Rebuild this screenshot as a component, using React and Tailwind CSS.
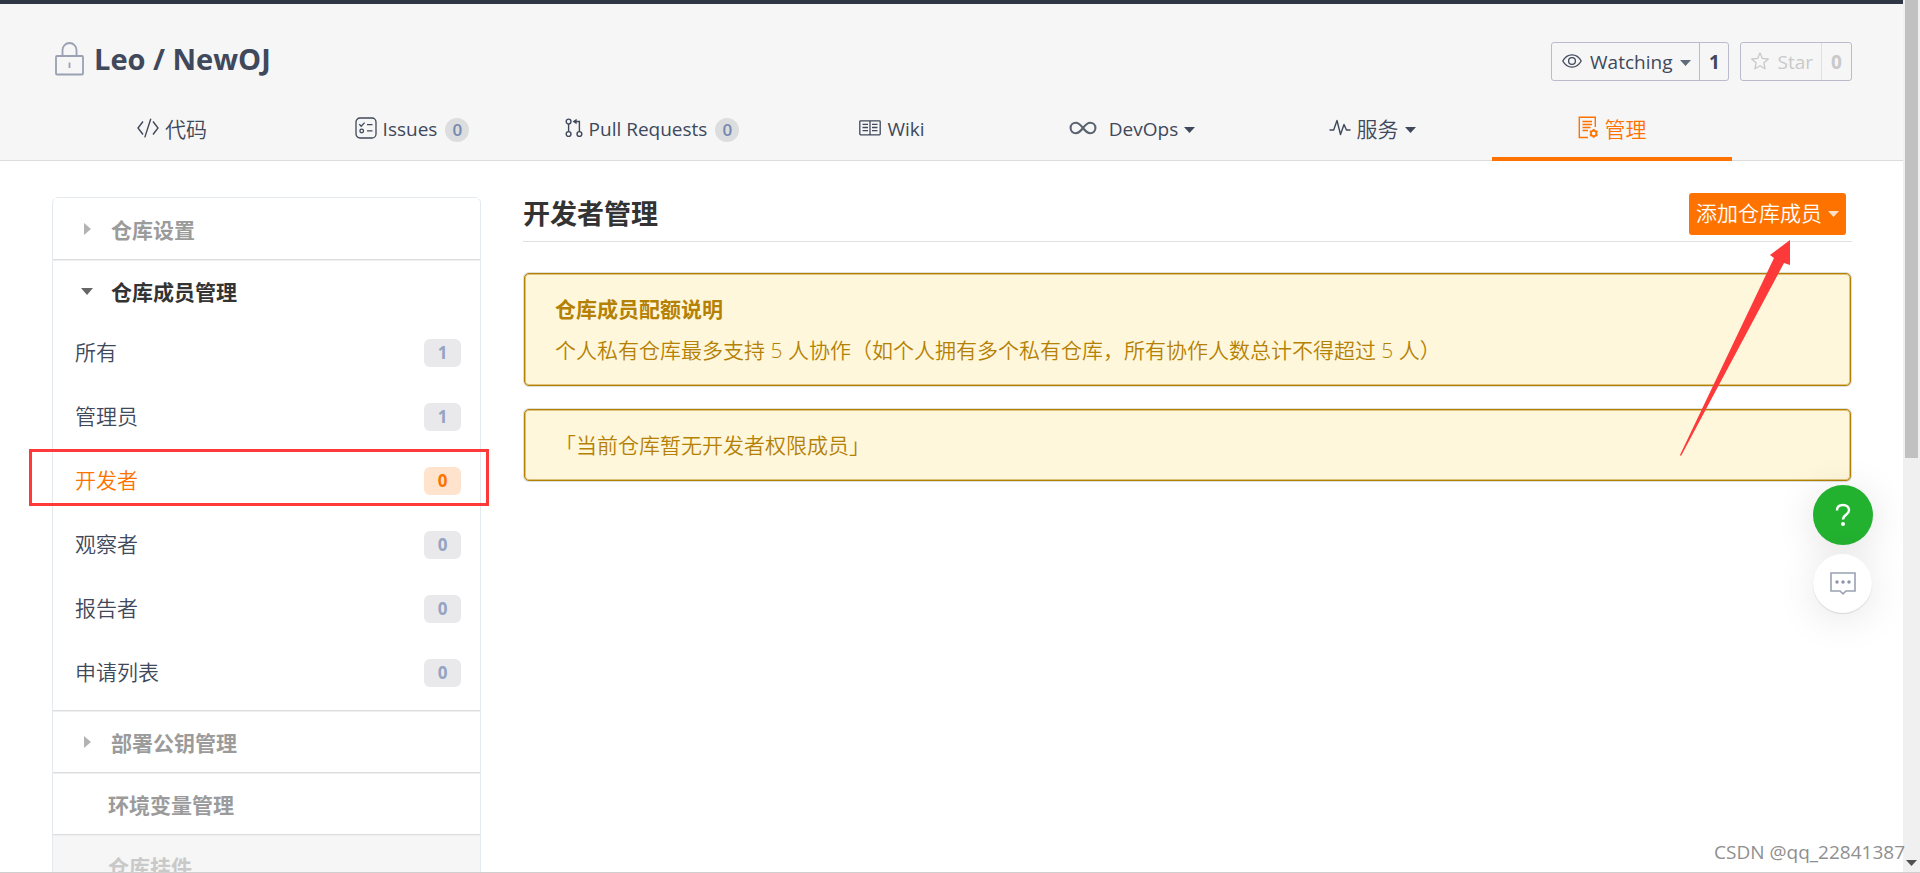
import React, { useState } from "react";

const navItems = [
  { key: "code", label: "代码", Icon: CodeIcon },
  { key: "issues", label: "Issues", count: 0, latin: true, Icon: IssuesIcon },
  { key: "pulls", label: "Pull Requests", count: 0, latin: true, Icon: PullIcon },
  { key: "wiki", label: "Wiki", latin: true, Icon: WikiIcon },
  { key: "devops", label: "DevOps", latin: true, dropdown: true, Icon: InfinityIcon },
  { key: "service", label: "服务", dropdown: true, Icon: PulseIcon },
  { key: "manage", label: "管理", Icon: ManageIcon },
];

const members = [
  { name: "所有", count: 1 },
  { name: "管理员", count: 1 },
  { name: "开发者", count: 0 },
  { name: "观察者", count: 0 },
  { name: "报告者", count: 0 },
  { name: "申请列表", count: 0 },
];

function CodeIcon() {
  return (
    <svg width="22" height="20" viewBox="0 0 22 20" fill="none" stroke="currentColor" strokeWidth="1.4">
      <path d="M6 3.5L1 10l5 6.5M16 3.5l5 6.5-5 6.5M13.8.8L7.8 19.4" />
    </svg>
  );
}

function IssuesIcon() {
  return (
    <svg width="22" height="22" viewBox="0 0 22 22" fill="none" stroke="currentColor" strokeWidth="1.3">
      <rect x="1" y="1" width="20" height="20" rx="4" />
      <path d="M4.3 7.3l1.9 1.9L9.6 5.6M12 7.7h5.5M12 13.8h5.5" />
      <circle cx="6.7" cy="14" r="1.8" />
    </svg>
  );
}

function PullIcon() {
  return (
    <svg width="18" height="20" viewBox="0 0 18 20" fill="none" stroke="currentColor" strokeWidth="1.4">
      <circle cx="3.6" cy="3.5" r="2.4" />
      <circle cx="3.6" cy="16" r="2.4" />
      <circle cx="14.4" cy="16" r="2.4" />
      <path d="M3.6 6v7.6M10 3.5h4.4v10.1" />
      <path d="M7.6 3.5L11.6.8v5.4z" fill="currentColor" stroke="none" />
    </svg>
  );
}

function WikiIcon() {
  return (
    <svg width="22" height="16" viewBox="0 0 22 16" fill="none" stroke="currentColor" strokeWidth="1.3">
      <rect x=".8" y=".8" width="20.4" height="14" rx=".8" />
      <path d="M11 1v14M3.5 4.3H9M3.5 7.5H9M3.5 10.6H9M13 4.3h5.5M13 7.5h5.5M13 10.6h5.5" />
    </svg>
  );
}

function InfinityIcon() {
  return (
    <svg width="28" height="14" viewBox="0 0 28 14" fill="none" stroke="#5b6270" strokeWidth="2.1">
      <path d="M14 7c-2.4-3.2-4.4-5.2-7.2-5.2C3.8 1.8 1.6 4.1 1.6 7s2.2 5.2 5.2 5.2C9.6 12.2 11.600 10.2 14 7c2.4-3.2 4.4-5.2 7.2-5.2 3 0 5.2 2.3 5.2 5.2s-2.2 5.2-5.2 5.2C18.4 12.2 16.4 10.2 14 7z" />
    </svg>
  );
}

function PulseIcon() {
  return (
    <svg width="22" height="17" viewBox="0 0 22 17" fill="none" stroke="currentColor" strokeWidth="1.4" strokeLinejoin="round">
      <path d="M.5 11h4.2L8 1.5l3.5 14L15 5.5l2.5 5.5h4" />
    </svg>
  );
}

function ManageIcon() {
  return (
    <svg width="21" height="23" viewBox="0 0 21 23" fill="none" stroke="currentColor" strokeWidth="1.4">
      <path d="M17.3 11V1.2h-16v20.3H10" />
      <path d="M4.5 5.5H14M4.5 8.5H14M4.5 11.5h8M4.5 14.5H10" strokeWidth="1.3" />
      <circle cx="15.7" cy="17.4" r="2.7" strokeWidth="1.7" />
      <path d="M15.7 13v1.6M15.7 20.2v1.6M11.9 15.2l1.4.8M18.1 18.8l1.4.8M11.9 19.6l1.4-.8M18.1 16l1.4-.8" strokeWidth="2" />
    </svg>
  );
}

function Caret({ className = "" }) {
  return (
    <svg width="11" height="6" viewBox="0 0 11 6" className={className} fill="currentColor">
      <path d="M0 0h11L5.5 6z" />
    </svg>
  );
}

function TopHeader() {
  return (
    <header className="border-b border-[#dcdcdc] bg-[#f6f6f6]">
      <div className="h-1 bg-[#2f3747]" />
      <div className="ml-[52px] mr-[51px]">
        <div className="flex justify-between pt-[38px]">
          <h1 className="flex h-[34px] items-center gap-2.5 pl-[3px] text-[29px] font-bold text-[#40485b]">
            <svg width="29" height="34" viewBox="0 0 29 34" fill="none" stroke="#9aa1b3" strokeWidth="1.8">
              <rect x="1" y="14" width="27" height="18.5" rx="1" />
              <path d="M7.5 14V8a7 7 0 0 1 14 0v6M14.5 20.5V26" />
            </svg>
            <a href="#repo">Leo / NewOJ</a>
          </h1>
          <div className="flex h-[39px] gap-[11px] text-[19px] text-[#40485b]">
            <div className="flex rounded-[3px] border border-[#babccb]">
              <button className="flex items-center gap-2 px-2 pt-0.5">
                <svg width="20" height="14" viewBox="0 0 20 14" fill="none" stroke="currentColor" strokeWidth="1.3" className="-mt-1 ml-0.5">
                  <path d="M.8 7C3 3 6.2.9 10 .9S17 3 19.2 7C17 11 13.8 13.1 10 13.1S3 11 .8 7z" />
                  <circle cx="10" cy="7" r="3.4" />
                </svg>
                <span>Watching</span>
                <Caret className="text-[#5f6b7a]" />
              </button>
              <a href="#watchers" className="flex w-[29px] items-center justify-center border-l border-[#babccb] pt-0.5 font-bold">1</a>
            </div>
            <div className="flex rounded-[3px] border border-[#babccb] text-[#c9c9c9]">
              <button className="flex items-center gap-2 px-2 pt-0.5" disabled>
                <svg width="18" height="18" viewBox="0 0 18 18" fill="none" stroke="currentColor" strokeWidth="1.3" strokeLinejoin="round" className="-mt-1 ml-0.5">
                  <path d="M9 1l2.4 5.4 5.9.6-4.4 4 1.2 5.8L9 13.8l-5.1 3 1.2-5.8L.7 7l5.9-.6z" />
                </svg>
                <span>Star</span>
              </button>
              <a href="#stars" className="flex w-[30px] items-center justify-center border-l border-[#e0e0e4] pt-0.5 font-bold">0</a>
            </div>
          </div>
        </div>
        <NavTabs />
      </div>
    </header>
  );
}

function NavTabs() {
  const [active, setActive] = useState("manage");

  return (
    <nav className="-mb-px mt-[19px] flex">
      {navItems.map(({ key, label, count, latin, dropdown, Icon }) => (
        <a
          key={key}
          href={`#${key}`}
          onClick={() => setActive(key)}
          className={`flex h-[61px] w-2/15 items-center justify-center border-b-4 pt-0.5 ${
            active === key ? "border-[#fe7300] text-[#fe7300]" : "border-transparent text-[#40485b]"
          }`}
        >
          <span className={`-mt-1 shrink-0 ${key === "devops" ? "mr-3" : "mr-1.5"}`}>
            <Icon />
          </span>
          <span className={`whitespace-nowrap ${latin ? "text-[19px]" : "text-[21px] font-[350]"}`}>{label}</span>
          {count !== undefined && (
            <span className="ml-2 flex size-6 items-center justify-center rounded-full bg-[#dcddde] text-[17px] font-semibold text-[#7588b0]">
              {count}
            </span>
          )}
          {dropdown && <Caret className="ml-1.5" />}
        </a>
      ))}
    </nav>
  );
}

function MenuGroup({ title, open, disabled, arrow = true, children }) {
  let color = "text-[#9b9b9b]";
  if (open) color = "text-[#333]";
  if (disabled) color = "text-[#c9c9c9]";

  return (
    <div className={`border-b border-t border-b-[#dddddd] border-t-[#f0f0f0] first:border-t-white ${disabled ? "bg-[#f6f6f6]" : ""}`}>
      <button className={`flex h-[60px] w-full items-center pt-1 text-[21px] font-bold ${color}`}>
        <span className={`flex justify-center ${arrow ? "ml-6 mr-[15px] w-[19px]" : "w-[55px]"}`}>
          {arrow && (
            <svg width="12" height="12" viewBox="0 0 12 12" fill="currentColor" className={open ? "-mt-1 rotate-90 text-[#666]" : "-mt-1 text-[#b3b3b3]"}>
              <path d="M3 0v12l7-6z" />
            </svg>
          )}
        </span>
        {title}
      </button>
      {children}
    </div>
  );
}

function Sidebar() {
  const [current, setCurrent] = useState("开发者");

  return (
    <aside className="mt-1 w-[429px] shrink-0 rounded-t-md border border-[#e3e9ed]">
      <MenuGroup title="仓库设置" />
      <MenuGroup title="仓库成员管理" open>
        <ul className="pb-[5px]">
          {members.map((m) => (
            <li key={m.name} className="relative">
              <a
                href="#members"
                onClick={() => setCurrent(m.name)}
                className={`flex h-16 items-center justify-between pl-[22px] pr-[19px] text-[21px] font-[350] ${
                  current === m.name ? "text-[#fe7300]" : "text-[#40485b]"
                }`}
              >
                {m.name}
                <span
                  className={`flex h-7 w-[37px] items-center justify-center rounded-md text-[17px] font-bold ${
                    current === m.name ? "bg-[#ffe3cc]" : "bg-[#e9e9eb] text-[#95a3c3]"
                  }`}
                >
                  {m.count}
                </span>
              </a>
              {m.name === "开发者" && (
                <div className="pointer-events-none absolute -left-6 -right-[9px] top-0 h-[57px] border-3 border-[#fd3939]" />
              )}
            </li>
          ))}
        </ul>
      </MenuGroup>
      <MenuGroup title="部署公钥管理" />
      <MenuGroup title="环境变量管理" arrow={false} />
      <MenuGroup title="仓库挂件" arrow={false} disabled />
    </aside>
  );
}

function Notice({ title, children }) {
  return (
    <div className="rounded-[5px] border border-[#b58105] bg-[#fff7db] px-[30px] py-5 text-[21px] leading-[30px] text-[#b58105] shadow-[0_0_0_1px_#dfe0dc,inset_0_0_0_1px_#e0c27a]">
      {title && <h3 className="mb-[11px] font-bold">{title}</h3>}
      <p className="font-[350]">{children}</p>
    </div>
  );
}

function FloatingTools() {
  return (
    <div className="absolute right-[47px] top-[485px] flex flex-col gap-[9px]">
      <button
        aria-label="帮助"
        className="flex size-[60px] items-center justify-center rounded-full bg-[#23b130] text-white shadow-[0_6px_40px_rgba(0,0,0,0.12)]"
      >
        <svg width="16" height="24" viewBox="0 0 16 24" fill="none" stroke="currentColor" strokeWidth="2.4">
          <path d="M2 7.5C2 4 4.3 2 8 2s6 2 6 5.2c0 4.800-6 4.300-6 9.3" />
          <circle cx="8" cy="21" r="2" fill="currentColor" stroke="none" />
        </svg>
      </button>
      <button
        aria-label="反馈"
        className="flex size-[59px] items-center justify-center rounded-full bg-white shadow-[0_1px_1px_rgba(0,0,0,0.12),0_6px_40px_rgba(0,0,0,0.1)]"
      >
        <svg width="26" height="23" viewBox="0 0 26 23" fill="none" stroke="#9aa1b3" strokeWidth="1.6">
          <path d="M1 1h24v18h-9l-3 2.8-3-2.8H1z" />
          <g fill="#8d94a8" stroke="none">
            <circle cx="7" cy="10" r="1.7" />
            <circle cx="13" cy="10" r="1.7" />
            <circle cx="19" cy="10" r="1.7" />
          </g>
        </svg>
      </button>
    </div>
  );
}

const App = () => {
  return (
    <div className="relative flex h-screen overflow-hidden bg-white font-['Open_Sans','Noto_Sans_CJK_SC',sans-serif]">
      <div className="min-w-0 flex-1">
        <TopHeader />
        <div className="ml-[52px] mr-[51px] flex gap-[42px] pt-8">
          <Sidebar />
          <main className="min-w-0 flex-1">
            <div className="relative flex items-center justify-between border-b border-[#e1e1e1] pb-1.5">
              <h2 className="text-[27px] font-bold leading-[42px] text-[#333]">开发者管理</h2>
              <button className="mr-1.5 flex h-[42px] items-center gap-1.5 rounded-[3px] bg-[#fe7300] px-[7px] text-[21px] font-[350] text-white">
                添加仓库成员
                <Caret className="text-[#ffe0c7]" />
              </button>
              {/* pointer to the add button */}
              <svg width="112" height="217" viewBox="0 0 112 217" className="pointer-events-none absolute right-[60px] top-[47px] z-10">
                <path d="M110 0v25l-6-2L1 216l-1-1L94 18l-4-3z" fill="#fd3939" />
              </svg>
            </div>
            <div className="mx-px mt-[31px] flex flex-col gap-[23px]">
              <Notice title="仓库成员配额说明">
                个人私有仓库最多支持 5 人协作（如个人拥有多个私有仓库，所有协作人数总计不得超过 5 人）
              </Notice>
              <Notice>「当前仓库暂无开发者权限成员」</Notice>
            </div>
          </main>
        </div>
      </div>

      {/* scroll track */}
      <div className="flex w-[17px] flex-col items-center justify-between bg-[#f0f0f0] pb-[7px]">
        <div className="h-[458px] w-[13px] bg-[#c1c1c1]" />
        <Caret className="text-[#505050]" />
      </div>

      <FloatingTools />
      <div className="absolute bottom-[7px] right-[15px] text-[19px] leading-7 text-[#8f8f8f]">CSDN @qq_22841387</div>
      <div className="absolute inset-x-0 bottom-0 h-px bg-[#cfcfcf]" />
    </div>
  );
};

export default App;
